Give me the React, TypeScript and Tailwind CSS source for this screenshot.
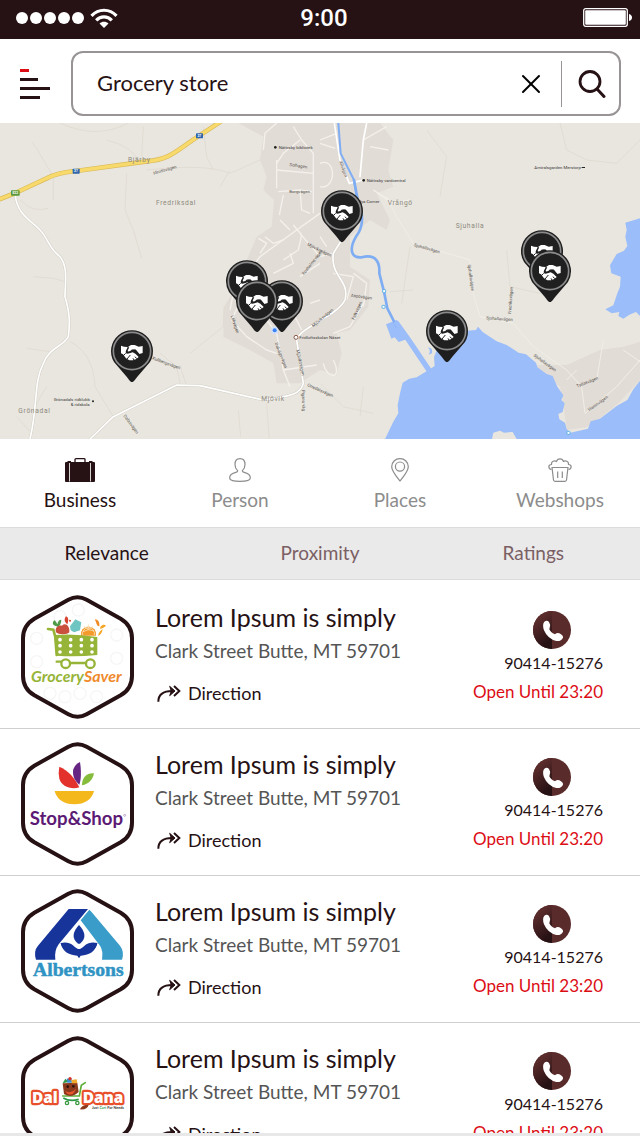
import { ReactNode, useState } from "react";
import { X } from "lucide-react";

interface Store {
  id: number;
  name: string;
  address: string;
  phone: string;
  openUntil: string;
  logo: ReactNode;
}

const pins = [
  { x: 1026, y: 273 },
  { x: 741, y: 483 },
  { x: 846, y: 543 },
  { x: 771, y: 543 },
  { x: 396, y: 693 },
  { x: 1341, y: 633 },
  { x: 1626, y: 393 },
  { x: 1650, y: 453 },
];

const areaLabels = [
  { x: 384, y: 127, text: "Bjärby" },
  { x: 468, y: 254, text: "Fredriksdal" },
  { x: 55, y: 878, text: "Grönadal" },
  { x: 784, y: 842, text: "Mjövik" },
  { x: 1163, y: 254, text: "Vrångö" },
  { x: 1367, y: 325, text: "Sjuhalla" },
];

const placeLabels = [
  { x: 836, y: 87, text: "Nättraby bibliotek" },
  { x: 1100, y: 186, text: "Nättraby vårdcentral" },
  { x: 1074, y: 248, text: "Nya Corner" },
  { x: 1603, y: 146, text: "Amiralsgården Merstorp" },
  { x: 898, y: 657, text: "Fridluftsskolan Näset" },
  { x: 161, y: 842, text: "Grönadals ridklubb" },
  { x: 212, y: 857, text: "& ridskola" },
];

const roadLabels = [
  { x: 461, y: 164, r: -16, text: "Idrottsvägen" },
  { x: 868, y: 138, r: 8, text: "Solhagen" },
  { x: 868, y: 219, r: 0, text: "Borgvägen" },
  { x: 921, y: 376, r: 26, text: "Mjöviksvägen" },
  { x: 912, y: 466, r: -52, text: "Rosholmsvägen" },
  { x: 692, y: 588, r: 72, text: "Lökvägen" },
  { x: 456, y: 718, r: 20, text: "Kullbergsvägen" },
  { x: 370, y: 888, r: 54, text: "Dalasvägen" },
  { x: 824, y: 670, r: 68, text: "Dalvägsvägen" },
  { x: 889, y: 690, r: 78, text: "Mjöviksvägen" },
  { x: 940, y: 622, r: -40, text: "Mjöviksvägen" },
  { x: 921, y: 798, r: 24, text: "Orredalsvägen" },
  { x: 905, y: 810, r: 88, text: "Pigans väg" },
  { x: 1052, y: 530, r: 8, text: "Aspövägen" },
  { x: 1063, y: 600, r: -66, text: "Falkvägen" },
  { x: 1018, y: 125, r: 70, text: "Allvägen" },
  { x: 1241, y: 378, r: 16, text: "Sjuhallavägen" },
  { x: 1403, y: 434, r: 82, text: "Sjuhallavägen" },
  { x: 1533, y: 582, r: -86, text: "Fredriksvägen" },
  { x: 1458, y: 598, r: 4, text: "Sjuhallavägen" },
  { x: 1600, y: 708, r: 36, text: "Sjuhallavägen" },
  { x: 1732, y: 803, r: -22, text: "Tallasvägen" },
  { x: 1768, y: 874, r: -36, text: "Hamnvägen" },
];

function MapPin({ x, y }: { x: number; y: number }) {
  return (
    <g transform={`translate(${x} ${y})`}>
      <path d="M0 93 C-6 93 -10 84 -16 77 L-54 33 A63 63 0 1 1 54 33 L16 77 C10 84 6 93 0 93Z" fill="#1e1e1e" />
      <circle r="56" fill="#202020" stroke="#8b8b8b" strokeWidth="5" />
      {/* left and right hands */}
      <path d="M-33 -16 L-24 -13 L-13 -12 L-19 2 Q-20 8 -13 8 L-5 6 L2 4 L10 8 L20 18 L13 24 L3 28 L-8 28 L-18 22 L-27 10 L-33 7Z" fill="#fff" />
      <path d="M-12 -12 L-3 -18 L8 -18 L20 -13 L32 -15 L32 6 L22 9 L11 -4 L3 -4 Q-6 5 -14 2Z" fill="#fff" />
      <path d="M-10 -11 L-16 1 Q-8 7 1 -3 L10 -3 L23 13" fill="none" stroke="#202020" strokeWidth="3.5" strokeLinejoin="round" />
      <path d="M-26 14 L-19 7 M-15 24 L-5 12 M6 27 L3 22 M14 23 L9 17" fill="none" stroke="#202020" strokeWidth="3" />
    </g>
  );
}

function StoreMap() {
  return (
    <svg
      viewBox="0 9 1920 948"
      preserveAspectRatio="xMidYMid slice"
      role="img"
      aria-label="Map of stores nearby"
      className="block w-full shrink-0 aspect-[640/316] bg-[#e9e6df]"
    >
      {/* built up areas */}
      <g fill="#e2dcd6">
        <path d="M715 9 L790 50 L780 120 L800 170 L790 210 L822 240 L815 320 L770 350 L740 420 L715 490 L672 560 L670 650 L750 690 L820 730 L830 790 L900 790 L960 750 L1010 765 L1025 700 L1010 640 L1050 630 L1105 560 L1110 480 L1050 440 L1050 350 L1110 300 L1160 330 L1170 300 L1130 220 L1180 200 L1165 150 L1180 60 L1140 9Z" />
        <path d="M1600 735 L1700 735 L1800 690 L1870 680 L1920 665 L1920 780 L1855 850 L1800 895 L1760 922 L1700 930 L1690 850 L1680 800Z" />
      </g>

      {/* faint paths */}
      <g fill="none" stroke="#dcd8cf" strokeWidth="2">
        <path d="M180 9 Q290 60 385 9 M320 60 Q400 80 420 130 M60 240 Q100 280 145 265 M95 65 L110 85 L160 170 L160 240 M380 160 L375 270 L400 330 L425 415" />
        <path d="M100 470 L160 475 L195 485 M80 685 L150 695 M140 800 L110 850 M210 665 Q280 700 285 800 L340 890 M50 890 L95 940 M540 790 L530 740 L480 700" />
        <path d="M610 20 L620 110 L640 150 M440 150 Q620 130 690 160 L780 120 M430 20 L425 110 M660 200 L690 150 M570 700 L670 620 L672 560 M560 800 L540 735" />
        <path d="M1230 380 L1205 550 M1240 510 L1170 515 M1680 9 L1700 90 L1760 120 L1850 130 L1920 60 M1280 30 L1340 110 L1320 230" />
        <path d="M1090 800 L1080 890 M960 790 L1030 860 L1120 880 M800 850 L808 957 M715 870 L722 950 M1520 390 L1530 500 L1620 520" />
      </g>

      {/* streets */}
      <g fill="none" stroke="#f4f1ec" strokeWidth="4" strokeLinejoin="round">
        <path d="M790 90 L795 40 L830 9 M880 20 L905 60 L940 100 L940 280 M830 150 L940 160 M835 215 L900 210 L935 215 M830 120 L830 205 M900 210 L905 270 L930 280 M850 225 L838 285 M900 60 L850 100 L830 130" />
        <path d="M960 70 L1005 85 M960 130 C1010 110 1010 210 960 200 M880 315 L905 345 L895 390 L850 420 M840 300 L870 330 M795 350 L820 370 L850 360 M780 400 L800 370 L775 355" />
        <path d="M900 340 L960 410 L1000 400 M870 400 L880 430 L820 460 M960 280 L890 330 L780 410 L700 520 L690 570 M930 550 L960 540 M900 470 L960 430" />
        <path d="M720 545 L695 600 L740 650 L800 690 L830 700 M775 560 L800 600 L830 640 L850 750 L950 735 M880 580 L905 630 M1000 460 L1060 470 L1040 540 M1060 460 L1100 490 L1090 560 M1090 550 L1050 620 L1000 640" />
        <path d="M850 750 L870 800 M1000 720 C1030 780 980 780 970 730 M1110 80 L1165 90 M1090 60 L1160 20 M1120 210 L1180 250 L1230 240 M960 60 L1010 40 M980 380 L960 350" />
      </g>
      <g fill="none" stroke="#f1eee8" strokeWidth="3" strokeLinejoin="round">
        <path d="M1160 230 L1190 290 L1240 370 L1410 420 L1420 520 L1440 590 L1540 610 L1600 680 L1700 750 L1745 800 L1755 880 M1700 780 L1730 750 M1755 880 L1850 800 L1920 720 M1790 780 L1810 660 M1870 690 L1920 725" />
      </g>

      {/* main roads */}
      <g fill="none" strokeLinejoin="round" strokeLinecap="round">
        <g stroke="#d3cfc6" strokeWidth="8">
          <path d="M46 225 C50 280 90 300 120 330 C145 355 145 385 180 410 C205 440 195 490 195 530 C210 580 210 610 205 650 C190 680 150 680 130 730 C100 790 115 850 90 957" />
          <path d="M270 957 L340 890 L530 795 L600 797 L790 840 C850 830 900 830 910 790 L890 660 C900 620 1010 590 1035 540 C1050 480 990 470 1000 400 L1025 360" />
        </g>
        <g stroke="#fff" strokeWidth="5">
          <path d="M46 225 C50 280 90 300 120 330 C145 355 145 385 180 410 C205 440 195 490 195 530 C210 580 210 610 205 650 C190 680 150 680 130 730 C100 790 115 850 90 957" />
          <path d="M270 957 L340 890 L530 795 L600 797 L790 840 C850 830 900 830 910 790 L890 660 C900 620 1010 590 1035 540 C1050 480 990 470 1000 400 L1025 360" />
          <path d="M1003 9 L1020 120 L1048 190 L1090 180 M1100 9 L1090 60 L1080 170" />
        </g>
        <path d="M0 237 L46 219 L140 175 Q175 157 228 153 L440 124 C510 118 520 98 598 47 L662 5" stroke="#d9b95a" strokeWidth="14" />
        <path d="M0 237 L46 219 L140 175 Q175 157 228 153 L440 124 C510 118 520 98 598 47 L662 5" stroke="#f7da6b" strokeWidth="10" />
      </g>

      {/* water */}
      <g fill="#9bbdf9">
        <path d="M1155 957 L1180 905 L1195 880 L1193 855 L1200 820 L1208 788 L1228 776 L1250 772 L1282 752 L1304 738 L1302 712 L1310 690 L1400 632 L1428 630 L1434 620 L1448 636 L1490 664 L1520 675 L1556 698 L1578 703 L1608 728 L1612 742 L1640 762 L1658 768 L1672 800 L1690 826 L1684 840 L1694 850 L1688 876 L1675 882 L1678 898 L1695 908 L1700 928 L1712 938 L1764 926 L1772 904 L1800 896 L1850 858 L1882 840 L1900 808 L1920 782 L1920 957Z" />
        <path d="M1920 295 L1876 308 L1880 330 L1876 350 L1882 378 L1872 392 L1850 402 L1830 436 L1834 460 L1862 470 L1860 500 L1852 520 L1840 556 L1816 568 L1835 580 L1858 576 L1855 588 L1870 596 L1888 584 L1908 576 L1920 588Z" />
        <path d="M1158 613 L1190 600 L1220 658 L1196 666 L1184 652 L1174 656Z" />
        <path d="M1284 682 Q1300 684 1296 700 L1286 704 Q1294 694 1284 682Z" />
      </g>
      <path d="M1476 957 L1480 938 L1500 932 L1512 938 L1538 936 L1550 957Z" fill="#e9e6df" />
      <g fill="none" stroke="#7fadf3" strokeLinecap="round">
        <path d="M1015 9 L1022 100 L1062 180 L1070 230" strokeWidth="6" />
        <path d="M1062 180 L1075 250 Q1100 310 1068 350 C1045 390 1055 415 1085 412 C1130 400 1140 430 1138 460 L1152 515 L1162 565 L1190 620" strokeWidth="8" />
        <path d="M1190 610 L1226 660 L1285 748" stroke="#9bbdf9" strokeWidth="16" />
      </g>
      <g fill="#fff" stroke="#5eb0e6" strokeWidth="3">
        <rect x="1148" y="509" width="9" height="9" rx="2" />
        <rect x="1146" y="556" width="9" height="9" rx="2" />
        <rect x="1701" y="934" width="9" height="9" rx="2" />
      </g>

      {/* road signs */}
      <rect x="33" y="211" width="26" height="16" rx="2" fill="#5b9a3c" />
      <rect x="218" y="146" width="21" height="15" rx="2" fill="#2f66ad" />
      <rect x="588" y="40" width="21" height="15" rx="2" fill="#2f66ad" />
      <g className="font-['Roboto',sans-serif] font-bold" fontSize="10" fill="#fff" textAnchor="middle">
        <text x="46" y="223">E22</text>
        <text x="228" y="157">27</text>
        <text x="598" y="51">27</text>
      </g>

      <g className="font-['Roboto',sans-serif] tracking-widest" fontSize="20" fill="#8d8a7e">
        {areaLabels.map((label) => (
          <text key={label.text} x={label.x} y={label.y}>
            {label.text}
          </text>
        ))}
      </g>
      <g className="font-['Roboto',sans-serif]" fontSize="13" fill="#3a3a3a">
        {placeLabels.map((label) => (
          <text key={label.text} x={label.x} y={label.y}>
            {label.text}
          </text>
        ))}
        {roadLabels.map((label, i) => (
          <text key={i} transform={`translate(${label.x} ${label.y}) rotate(${label.r})`} fill="#55524e">
            {label.text}
          </text>
        ))}
      </g>
      <g fill="#222">
        <circle cx="826" cy="82" r="4" />
        <circle cx="1091" cy="181" r="4" />
        <circle cx="279" cy="844" r="3" />
        <rect x="1745" y="141" width="10" height="3" />
      </g>
      <circle cx="888" cy="652" r="6" fill="#fff" stroke="#8a5a4d" strokeWidth="3" />
      <rect x="814" y="621" width="20" height="20" rx="6" fill="#cfe0fb" />
      <circle cx="824" cy="631" r="6" fill="#3b82f6" />

      {pins.map((pin) => (
        <MapPin key={`${pin.x}-${pin.y}`} x={pin.x} y={pin.y} />
      ))}
    </svg>
  );
}

function GrocerySaverLogo() {
  return (
    <g transform="translate(-63 -30)">
      <g fill="none" stroke="#f6f6f6" strokeWidth="4">
        <circle cx="110" cy="160" r="18" />
        <circle cx="110" cy="230" r="18" />
        <circle cx="235" cy="75" r="18" />
        <circle cx="180" cy="95" r="18" />
        <circle cx="350" cy="150" r="18" />
        <circle cx="350" cy="220" r="18" />
        <circle cx="150" cy="325" r="18" />
        <circle cx="195" cy="335" r="18" />
        <circle cx="240" cy="325" r="18" />
        <circle cx="290" cy="335" r="18" />
      </g>
      <path d="M170 124 C156 122 156 110 164 106 C168 110 170 114 172 118 C174 108 178 104 184 104 C184 114 180 122 174 126Z" fill="#4f9a48" />
      <path d="M168 142 C164 128 174 120 186 122 C196 112 210 122 208 142 C204 150 174 150 168 142Z" fill="#c9503c" />
      <path d="M198 94 C206 96 206 108 202 118 C192 110 192 102 198 94Z" fill="#d8432f" />
      <circle cx="210" cy="107" r="3" fill="#d8432f" />
      <path d="M210 124 L226 103 L244 112 L240 136 L222 142 L212 136Z" fill="#6fc5c2" />
      <path d="M243 152 A23 23 0 1 1 288 152Z" fill="#f39a2b" />
      <path d="M248 150 A18 18 0 1 1 283 150 M265 134 L252 124 M265 134 L265 118 M265 134 L278 124 M265 134 L282 138 M265 134 L249 140" fill="none" stroke="#fde0b4" strokeWidth="2.5" />
      <path d="M284 104 C292 102 300 110 298 124 C288 122 290 110 284 104Z" fill="#f08a24" />
      <path d="M302 124 C308 118 314 118 318 122 C312 128 306 130 300 132Z M294 152 C296 142 302 136 308 132 C306 144 302 150 294 152Z" fill="#f5a623" />
      <path d="M144 132 L160 134 L166 156 L170 210" fill="none" stroke="#96b437" strokeWidth="8" strokeLinecap="round" />
      <path d="M162 150 Q225 145 292 156 L292 210 Q230 216 170 212Z" fill="#96b437" />
      <g fill="#fff">
        {[164, 182, 201].map((cy) =>
          [180, 212, 244, 276].map((cx) => <circle key={`${cx}-${cy}`} cx={cx} cy={cy} r="5.5" />)
        )}
      </g>
      <path d="M170 230 L184 230 M212 234 L256 234" stroke="#96b437" strokeWidth="7" strokeLinecap="round" />
      <g fill="#fff" stroke="#96b437" strokeWidth="7">
        <circle cx="197" cy="236" r="13" />
        <circle cx="271" cy="236" r="13" />
      </g>
      <text x="93" y="292" className="font-['Lato',sans-serif] font-bold italic" fontSize="48" fill="#96b437">
        Grocery<tspan fill="#ef8a2c">Saver</tspan>
      </text>
    </g>
  );
}

function StopShopLogo() {
  return (
    <g transform="translate(-63 -24)">
      <path d="M178 98 C204 108 226 134 238 160 C212 168 184 156 178 134 Q174 116 178 98Z" fill="#e2322b" />
      <path d="M240 84 C244 110 244 136 238 152 C224 142 216 124 220 106 Q226 90 240 84Z" fill="#662483" />
      <path d="M282 118 C278 138 266 150 246 154 C246 134 256 116 282 118Z" fill="#86bc3c" />
      <path d="M164 171 L282 171 C276 196 254 211 223 211 C192 211 170 196 164 171Z" fill="#f5b81c" />
      <text x="89" y="272" className="font-['Lato',sans-serif] font-bold" fontSize="56" fill="#5b1a74">
        Stop&amp;Shop
      </text>
      <circle cx="374" cy="244" r="3" fill="none" stroke="#5b1a74" />
    </g>
  );
}

function AlbertsonsLogo() {
  return (
    <g transform="translate(-63 -30)">
      <path d="M206 90 L264 90 L176 196 Q162 216 166 242 L108 242 Q100 216 114 200Z" fill="#16349a" />
      <path d="M268 92 L274 98 L360 200 Q374 218 366 242 L306 242 Q310 214 300 200 L242 124Z" fill="#3a9cc9" />
      <g fill="#16349a">
        <path d="M237 138 C256 158 260 178 240 194 L234 194 C214 178 218 158 237 138Z" />
        <path d="M182 192 C206 186 226 196 234 222 C212 228 188 218 182 192Z" />
        <path d="M292 192 C268 186 248 196 240 222 C262 228 286 218 292 192Z" />
        <path d="M182 192 Q206 190 234 210 L240 210 Q268 190 292 192 Q284 228 242 230 L237 238 L232 230 Q190 228 182 192Z" />
      </g>
      <text x="99" y="292" className="font-['Liberation_Serif',serif] font-bold" fontSize="59" fill="#2f93c3" stroke="#2f93c3" strokeWidth="1.5">
        Albertsons
      </text>
    </g>
  );
}

function DalDanaLogo() {
  return (
    <g transform="translate(-63 -48)">
      <path d="M188 228 L238 228 L244 196 L256 188" fill="none" stroke="#5fae3a" strokeWidth="5" strokeLinecap="round" />
      <path d="M190 234 Q210 246 236 238" fill="none" stroke="#2f9a4a" strokeWidth="5" />
      <circle cx="201" cy="249" r="5" fill="#fff" stroke="#3a9a3f" strokeWidth="4" />
      <circle cx="232" cy="249" r="5" fill="#fff" stroke="#3a9a3f" strokeWidth="4" />
      <path d="M188 190 L232 188 L236 216 Q214 236 192 222Z" fill="#8c3a1d" />
      <path d="M196 212 Q212 224 228 206 Q218 232 200 220Z" fill="#e9572f" />
      <circle cx="203" cy="200" r="4" fill="#2c150c" />
      <circle cx="220" cy="199" r="4" fill="#2c150c" />
      <path d="M188 190 L196 176 L206 186Z" fill="#2f9a4a" />
      <path d="M200 176 L214 174 L216 188 L202 188Z" fill="#3a8fd0" />
      <path d="M214 180 L230 178 L232 190 L216 190Z" fill="#f0a92c" />
      <circle cx="210" cy="176" r="5" fill="#d8342a" />
      <g
        className="font-['Open_Sans',sans-serif] font-extrabold"
        fontSize="46"
        fill="#fff"
        stroke="#e8502c"
        strokeWidth="13"
        strokeLinejoin="round"
        paintOrder="stroke"
      >
        <text x="96" y="248">Dal</text>
        <text x="248" y="248">Dana</text>
      </g>
      <path d="M240 268 Q244 254 266 254 Q262 270 240 268Z" fill="#8c3a1d" />
      <text x="276" y="267" className="font-['Lato',sans-serif] font-bold" fontSize="11" fill="#333">
        Just <tspan fill="#2f9a4a">Cart</tspan> For Needs
      </text>
    </g>
  );
}

function HexLogo({ children }: { children: ReactNode }) {
  return (
    <svg viewBox="0 0 339 372" aria-hidden="true" className="w-[113px] h-[124px] shrink-0">
      {children}
      <path
        d="M142 14 Q169.5 -1 197 14 L299 71 Q333 91 333 130 L333 242 Q333 281 299 301 L197 358 Q169.5 373 142 358 L40 301 Q6 281 6 242 L6 130 Q6 91 40 71Z"
        fill="none"
        stroke="#261114"
        strokeWidth="12"
      />
    </svg>
  );
}

function DirectionIcon() {
  return (
    <svg viewBox="0 0 72 51" aria-hidden="true" className="w-6 h-[17px]" fill="none" stroke="#261114" strokeWidth="6">
      <path d="M4 50 C4 28 18 18 46 18" />
      <path d="M38 4 L54 18 L38 32 L43 18Z" fill="#261114" strokeWidth="3" />
      <path d="M51 3 L67 18 L51 33" />
    </svg>
  );
}

function PhoneIcon() {
  return (
    <svg viewBox="0 0 114 114" aria-hidden="true" className="w-[38px] h-[38px]">
      <defs>
        <linearGradient id="phone-shade" x1="0" y1="0" x2="0.4" y2="1">
          <stop offset="0.3" stopColor="#5a2b2b" />
          <stop offset="1" stopColor="#261114" />
        </linearGradient>
      </defs>
      <circle cx="57" cy="57" r="57" fill="#5a2b2b" />
      <path d="M57 0 A57 57 0 0 0 57 114Z" fill="url(#phone-shade)" />
      <path
        d="M34 32 Q42 26 48 33 Q54 42 50 50 Q47 54 52 60 Q60 70 66 70 Q74 62 84 70 Q92 76 90 80 Q84 92 70 90 Q44 84 33 58 Q27 40 34 32Z"
        fill="#fff"
      />
    </svg>
  );
}

const stores: Store[] = [
  { id: 1, name: "Lorem Ipsum is simply", address: "Clark Street Butte, MT 59701", phone: "90414-15276", openUntil: "23:20", logo: <GrocerySaverLogo /> },
  { id: 2, name: "Lorem Ipsum is simply", address: "Clark Street Butte, MT 59701", phone: "90414-15276", openUntil: "23:20", logo: <StopShopLogo /> },
  { id: 3, name: "Lorem Ipsum is simply", address: "Clark Street Butte, MT 59701", phone: "90414-15276", openUntil: "23:20", logo: <AlbertsonsLogo /> },
  { id: 4, name: "Lorem Ipsum is simply", address: "Clark Street Butte, MT 59701", phone: "90414-15276", openUntil: "23:20", logo: <DalDanaLogo /> },
];

const tabs = [
  {
    label: "Business",
    icon: (
      <svg viewBox="0 0 30 24" className="w-[30px] h-6">
        <path d="M10 4 V1.5 Q10 .7 11 .7 H19 Q20 .7 20 1.5 V4" fill="none" stroke="#261114" strokeWidth="1.3" />
        <path d="M1 4 H2.5 V3 H6 V4 H24 V3 H27.5 V4 H29 Q30 4 30 5 V23 Q30 24 29 24 H1 Q0 24 0 23 V5 Q0 4 1 4Z" fill="#261114" />
        <path d="M4.5 5 V23.5 M25.5 5 V23.5" stroke="#d8d2d2" strokeWidth="1" />
      </svg>
    ),
  },
  {
    label: "Person",
    icon: (
      <svg viewBox="0 0 22 24" className="w-[22px] h-6" fill="none" stroke="#8c8c8c" strokeWidth="1.2">
        <path d="M11 .7 C14.5 .7 16 3 16 6.5 C16 9.5 14.7 11.5 13.4 12.6 C13.2 14 14 14.2 16 14.7 C20 15.7 21.3 17.5 21.3 20 C21.3 22.5 17 23.3 11 23.3 C5 23.3 .7 22.5 .7 20 C.7 17.5 2 15.7 6 14.7 C8 14.2 8.8 14 8.6 12.6 C7.3 11.5 6 9.5 6 6.5 C6 3 7.5 .7 11 .7Z" />
      </svg>
    ),
  },
  {
    label: "Places",
    icon: (
      <svg viewBox="0 0 18 24" className="w-[18px] h-6" fill="none" stroke="#8c8c8c" strokeWidth="1.2">
        <path d="M9 .7 C13.7 .7 17.3 4.2 17.3 8.7 C17.3 13 12.5 18.5 9 23 C5.5 18.5 .7 13 .7 8.7 C.7 4.2 4.3 .7 9 .7Z" />
        <circle cx="9" cy="8.6" r="4.6" />
      </svg>
    ),
  },
  {
    label: "Webshops",
    icon: (
      <svg viewBox="0 0 24 24" className="w-6 h-6" fill="none" stroke="#8c8c8c" strokeWidth="1.2" strokeLinejoin="round">
        <path d="M3.5 11.5 C0 10.5 0 6.5 3.5 6.5 C3 3.5 6.5 2 8.5 3.5 C9.5 0 14.5 0 15.5 3.5 C17.5 2 21 3.5 20.5 6.5 C24 6.5 24 10.5 20.5 11.5" />
        <path d="M3.5 9.5 H20.5 M4 9.5 L5.5 22 Q5.7 23.3 7 23.3 H17 Q18.3 23.3 18.5 22 L20 9.5 M9.7 13.5 V20 M14.3 13.5 V20" />
      </svg>
    ),
  },
];

const sorts = ["Relevance", "Proximity", "Ratings"];

export default function App() {
  const [query, setQuery] = useState("Grocery store");
  const [activeTab, setActiveTab] = useState("Business");
  const [activeSort, setActiveSort] = useState("Relevance");

  return (
    <div className="flex h-screen flex-col overflow-hidden bg-white font-['Lato',sans-serif] text-[#261114]">
      {/* status bar */}
      <div className="grid h-[39px] shrink-0 grid-cols-3 items-center bg-[#261114] pb-1 pl-4 pr-2 text-white">
        <div className="flex items-center gap-[6px]">
          <div className="flex gap-[2px]">
            {[0, 1, 2, 3, 4].map((dot) => (
              <span key={dot} className="h-3 w-3 rounded-full bg-white" />
            ))}
          </div>
          <svg viewBox="0 0 28 20" className="h-5 w-7" fill="none" stroke="#fff" strokeWidth="3.2">
            <path d="M1.5 7.8 C8.5 .4 19.5 .4 26.5 7.8" />
            <path d="M6.2 12.3 C10.5 7.8 17.5 7.8 21.8 12.3" />
            <path d="M9.5 15.5 C12 13 16 13 18.5 15.5 L14 20Z" fill="#fff" stroke="none" />
          </svg>
        </div>
        <span className="text-center font-['Roboto',sans-serif] text-2xl font-medium leading-6">9:00</span>
        <svg viewBox="0 0 49 19" className="h-[19px] w-[49px] justify-self-end">
          <rect x=".7" y=".7" width="43.6" height="17.6" rx="2" fill="none" stroke="#fff" strokeWidth="1.3" />
          <rect x="2.2" y="2.2" width="40.6" height="14.6" rx="1" fill="#fff" />
          <path d="M46 6 Q49 7 49 9.5 Q49 12 46 13Z" fill="#fff" />
        </svg>
      </div>

      {/* search */}
      <header className="flex shrink-0 items-center gap-[21px] pb-[7px] pl-5 pr-[19px] pt-3">
        <button aria-label="Menu" className="flex w-[30px] shrink-0 flex-col gap-[6px]">
          <span className="h-[3px] w-[9px] bg-[#dc0d15]" />
          <span className="h-[3px] w-[18px] bg-[#261114]" />
          <span className="h-[3px] w-[30px] bg-[#261114]" />
          <span className="h-[3px] w-5 bg-[#261114]" />
        </button>
        <form
          className="flex h-[65px] min-w-0 flex-1 items-center rounded-xl border-2 border-[#989395]"
          onSubmit={(e) => e.preventDefault()}
        >
          <input
            aria-label="Search"
            value={query}
            onChange={(e) => setQuery(e.target.value)}
            className="min-w-0 flex-1 pl-6 pb-[2px] text-[22px] leading-7 outline-none"
          />
          <button type="button" aria-label="Clear" onClick={() => setQuery("")} className="px-[14px] text-black">
            <X size={32} strokeWidth={1.5} />
          </button>
          <span className="h-[46px] w-px bg-[#989395]" />
          <button type="submit" aria-label="Search" className="pl-4 pr-[13px]">
            <svg viewBox="0 0 28 30" className="h-[30px] w-7" fill="none" stroke="#261114" strokeLinecap="round">
              <circle cx="12" cy="12.5" r="10" strokeWidth="2.8" />
              <path d="M19.5 20.5 L26 27.5" strokeWidth="3" />
            </svg>
          </button>
        </form>
      </header>

      <StoreMap />

      {/* category tabs */}
      <nav className="grid shrink-0 grid-cols-4 pb-[15px] pt-[19px]">
        {tabs.map((tab) => (
          <button
            key={tab.label}
            onClick={() => setActiveTab(tab.label)}
            className={`flex flex-col items-center gap-[5px] text-[19px] leading-[25px] ${
              activeTab === tab.label ? "text-[#261114]" : "text-[#8c8c8c]"
            }`}
          >
            {tab.icon}
            {tab.label}
          </button>
        ))}
      </nav>

      {/* sort options */}
      <div className="grid shrink-0 grid-cols-3 border-y border-[#dcdcdc] bg-[#eaeaea] pb-[14px] pt-3">
        {sorts.map((sort) => (
          <button
            key={sort}
            onClick={() => setActiveSort(sort)}
            className={`text-[19px] leading-[25px] ${activeSort === sort ? "text-[#261114]" : "text-[#7a6064]"}`}
          >
            {sort}
          </button>
        ))}
      </div>

      {/* results */}
      <ul className="min-h-0 flex-1 overflow-y-auto pt-px [scrollbar-width:none]">
        {stores.map((store) => (
          <li
            key={store.id}
            className="flex items-start border-t border-[#cfcfcf] pb-[9px] pl-[21px] pr-[37px] pt-[13px] first:border-transparent"
          >
            <HexLogo>{store.logo}</HexLogo>
            <div className="ml-[21px] min-w-0 flex-1 pt-[7px]">
              <h2 className="text-[25px] leading-[30px]">{store.name}</h2>
              <p className="mt-[6px] text-[19px] leading-[26px] text-[#555]">{store.address}</p>
              <a href="#direction" className="mt-[17px] flex items-center gap-[7px] pl-[2px] text-lg leading-6">
                <DirectionIcon />
                Direction
              </a>
            </div>
            <div className="flex shrink-0 flex-col items-end pt-4">
              <a href={`tel:${store.phone}`} className="flex flex-col items-center gap-[2px] text-base leading-6">
                <span className="mr-1">
                  <PhoneIcon />
                </span>
                {store.phone}
              </a>
              <p className="mt-[5px] text-[17px] leading-6 text-[#dc0d15]">Open Until {store.openUntil}</p>
            </div>
          </li>
        ))}
      </ul>
      <div className="h-[3px] shrink-0 bg-[#e8e8e8]" />
    </div>
  );
}
